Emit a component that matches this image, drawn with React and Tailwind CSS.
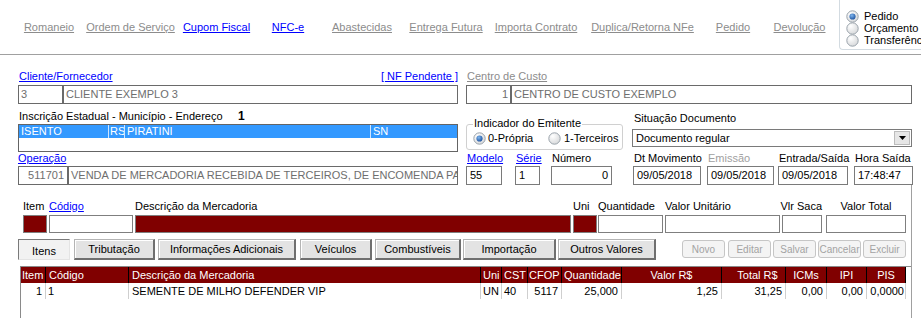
import React from 'react';

const links = [
  { t: 'Romaneio', w: 'w-[98px]', on: false },
  { t: 'Ordem de Serviço', w: 'w-[65px]', on: false },
  { t: 'Cupom Fiscal', w: 'w-[107px]', on: true },
  { t: 'NFC-e', w: 'w-[36px]', on: true },
  { t: 'Abastecidas', w: 'w-[112px]', on: false },
  { t: 'Entrega Futura', w: 'w-[56px]', on: false },
  { t: 'Importa Contrato', w: 'w-[124px]', on: false },
  { t: 'Duplica/Retorna NFe', w: 'w-[89px]', on: false },
  { t: 'Pedido', w: 'w-[92px]', on: false },
  { t: 'Devolução', w: 'w-[41px]', on: false },
];

function Radio({ checked }) {
  return (
    <svg width="13" height="13" viewBox="0 0 13 13" className="shrink-0">
      <defs>
        <radialGradient id="rface" cx="0.35" cy="0.3" r="0.8">
          <stop offset="0" stopColor="#ffffff" />
          <stop offset="1" stopColor="#d4d6d8" />
        </radialGradient>
        <radialGradient id="rdot" cx="0.4" cy="0.35" r="0.7">
          <stop offset="0" stopColor="#7fb6ee" />
          <stop offset="1" stopColor="#1a4f9c" />
        </radialGradient>
      </defs>
      <circle cx="6.5" cy="6.5" r="5.7" fill="url(#rface)" stroke="#9aa3ab" strokeWidth="1" />
      {checked && <circle cx="6.5" cy="6.5" r="3.1" fill="url(#rdot)" />}
    </svg>
  );
}

function Field({ label, labelCls = 'text-black', ml, w, value, right }) {
  return (
    <div className={`flex flex-col ${ml} ${w}`}>
      <div className={`h-[13px] leading-[13px] pl-[1px] whitespace-nowrap ${labelCls}`}>{label}</div>
      <div
        className={`mt-[1px] h-[19px] border border-[#7a7a7a] flex items-center px-[3px] overflow-hidden ${
          right ? 'justify-end' : ''
        }`}
      >
        {value}
      </div>
    </div>
  );
}

const itemCols = [
  { l: 'Item', ml: 'ml-[23px]', w: 'w-[24px]', red: true, la: 'justify-start' },
  { l: 'Código', ml: 'ml-[2px]', w: 'w-[84px]', red: false, la: 'justify-start', blue: true },
  { l: 'Descrição da Mercadoria', ml: 'ml-[2px]', w: 'w-[436px]', red: true, la: 'justify-start' },
  { l: 'Uni', ml: 'ml-[2px]', w: 'w-[24px]', red: true, la: 'justify-start' },
  { l: 'Quantidade', ml: 'ml-[1px]', w: 'w-[65px]', red: false, la: 'justify-start' },
  { l: 'Valor Unitário', ml: 'ml-[2px]', w: 'w-[115px]', red: false, la: 'justify-start' },
  { l: 'Vlr Saca', ml: 'ml-[2px]', w: 'w-[40px]', red: false, la: 'justify-end' },
  { l: 'Valor Total', ml: 'ml-[4px]', w: 'w-[80px]', red: false, la: 'justify-center' },
];

const tabs = [
  { t: 'Itens', ml: 'ml-[18px]', w: 'w-[52px]', on: true },
  { t: 'Tributação', ml: 'ml-[4px]', w: 'w-[81px]' },
  { t: 'Informações Adicionais', ml: 'ml-[3px]', w: 'w-[138px]' },
  { t: 'Veículos', ml: 'ml-[4px]', w: 'w-[72px]' },
  { t: 'Combustíveis', ml: 'ml-[3px]', w: 'w-[86px]' },
  { t: 'Importação', ml: 'ml-[2px]', w: 'w-[93px]' },
  { t: 'Outros Valores', ml: 'ml-[2px]', w: 'w-[98px]' },
];

const actions = [
  { t: 'Novo', ml: 'ml-[26px]' },
  { t: 'Editar', ml: 'ml-[3px]' },
  { t: 'Salvar', ml: 'ml-[2px]' },
  { t: 'Cancelar', ml: 'ml-[2px]' },
  { t: 'Excluir', ml: 'ml-[2px]' },
];

const cols = [
  { h: 'Item', w: 'w-[25px]', ha: 'justify-start pl-[1px]', v: '1', va: 'justify-end pr-[3px]' },
  { h: 'Código', w: 'w-[83px]', ha: 'justify-start pl-[3px]', v: '1', va: 'justify-start pl-[2px]' },
  { h: 'Descrição da Mercadoria', w: 'w-[352px]', ha: 'justify-start pl-[3px]', v: 'SEMENTE DE MILHO DEFENDER VIP', va: 'justify-start pl-[3px]' },
  { h: 'Uni', w: 'w-[21px]', ha: 'justify-start pl-[2px]', v: 'UN', va: 'justify-start pl-[2px]' },
  { h: 'CST', w: 'w-[26px]', ha: 'justify-start pl-[2px]', v: '40', va: 'justify-start pl-[2px]' },
  { h: 'CFOP', w: 'w-[34px]', ha: 'justify-start pl-[1px]', v: '5117', va: 'justify-end pr-[3px]' },
  { h: 'Quantidade', w: 'w-[60px]', ha: 'justify-start pl-[2px]', v: '25,000', va: 'justify-end pr-[3px]' },
  { h: 'Valor R$', w: 'w-[100px]', ha: 'justify-center', v: '1,25', va: 'justify-end pr-[3px]' },
  { h: 'Total R$', w: 'w-[64px]', ha: 'justify-center pl-[8px]', v: '31,25', va: 'justify-end pr-[3px]' },
  { h: 'ICMs', w: 'w-[41px]', ha: 'justify-center', v: '0,00', va: 'justify-end pr-[3px]' },
  { h: 'IPI', w: 'w-[40px]', ha: 'justify-center', v: '0,00', va: 'justify-end pr-[3px]' },
  { h: 'PIS', w: 'w-[39px]', ha: 'justify-center', v: '0,0000', va: 'justify-end pr-[1px]' },
];

export default function App() {
  return (
    <div className="w-[921px] h-[318px] overflow-hidden bg-white text-[11px] leading-[13px] text-black font-['Liberation_Sans',Arial,sans-serif]">
      {/* Top bar */}
      <div className="h-[55px] flex border-b border-[#a0a0a0]">
        <div className="flex items-center h-[54px]">
          {links.map((l) => (
            <div key={l.t} className={`flex justify-center whitespace-nowrap ${l.w}`}>
              <span className={`underline ${l.on ? 'text-[#0000ff]' : 'text-[#8c8c8c]'}`}>{l.t}</span>
            </div>
          ))}
        </div>
        <div className="ml-auto self-start w-[82px] h-[50px] border-l border-b border-[#d3dbe1] rounded-bl-[4px] overflow-hidden pt-[10px] pl-[6px] flex flex-col">
          {['Pedido', 'Orçamento', 'Transferência'].map((t, i) => (
            <div key={t} className="h-[12px] flex items-center gap-[5px] whitespace-nowrap">
              <Radio checked={i === 0} />
              <span>{t}</span>
            </div>
          ))}
        </div>
      </div>

      {/* Upper form */}
      <div className="pl-[18px]">
        <div className="mt-[15px] h-[13px] flex">
          <div className="w-[440px] flex justify-between">
            <span className="underline text-[#0000ff] pl-[1px]">Cliente/Fornecedor</span>
            <span className="underline text-[#0000ff]">[ NF Pendente ]</span>
          </div>
          <div className="ml-[8px] pl-[1px]">
            <span className="underline text-[#8c8c8c]">Centro de Custo</span>
          </div>
        </div>

        <div className="mt-[2px] h-[19px] flex text-[#6e6e6e]">
          <div className="w-[440px] border border-[#6a6a6a] flex">
            <div className="w-[43px] pl-[2px] flex items-center">3</div>
            <div className="flex-1 border-l-2 border-[#6a6a6a] pl-[2px] flex items-center">CLIENTE EXEMPLO 3</div>
          </div>
          <div className="ml-[8px] w-[446px] border border-[#6a6a6a] flex">
            <div className="w-[43px] pr-[2px] flex items-center justify-end">1</div>
            <div className="flex-1 border-l-2 border-[#6a6a6a] pl-[2px] flex items-center">CENTRO DE CUSTO EXEMPLO</div>
          </div>
        </div>

        <div className="h-[48px] flex">
          <div className="w-[440px] pt-[6px] flex flex-col">
            <div className="h-[13px] flex whitespace-nowrap">
              <span className="w-[220px] pl-[1px]">Inscrição Estadual - Município - Endereço</span>
              <span className="font-bold text-[12px]">1</span>
            </div>
            <div className="mt-[1px] h-[28px] border border-[#646464]">
              <div className="h-[13px] bg-[#3399ff] text-white flex leading-[13px]">
                <div className="w-[89px] pl-[2px]">ISENTO</div>
                <div className="w-[16px] border-l border-[#cfe5ff] pl-[1px] overflow-hidden">RS</div>
                <div className="w-[246px] border-l border-[#cfe5ff] pl-[2px]">PIRATINI</div>
                <div className="flex-1 border-l border-[#cfe5ff] pl-[2px]">SN</div>
              </div>
            </div>
          </div>
          <div className="ml-[8px] flex">
            <div className="mt-[20px] w-[157px] h-[26px] relative border border-[#d0d0d0] rounded-[3px] flex items-center pl-[6px] pt-[3px]">
              <span className="absolute left-[6px] -top-[8px] bg-white px-[1px] whitespace-nowrap">Indicador do Emitente</span>
              <div className="w-[75px] flex items-center gap-[2px]">
                <Radio checked />
                <span>0-Própria</span>
              </div>
              <div className="flex items-center gap-[3px]">
                <Radio />
                <span>1-Terceiros</span>
              </div>
            </div>
            <div className="ml-[9px] pt-[8px] flex flex-col w-[280px]">
              <div className="h-[13px] pl-[2px]">Situação Documento</div>
              <div className="mt-[4px] h-[18px] border border-[#7a7a7a] flex">
                <div className="flex-1 pl-[3px] flex items-center">Documento regular</div>
                <div className="w-[16px] m-[1px] bg-[#e6e6e6] border border-[#bcbcbc] flex items-center justify-center">
                  <svg width="7" height="4" viewBox="0 0 7 4">
                    <path d="M0 0h7L3.5 4z" fill="#000" />
                  </svg>
                </div>
              </div>
            </div>
          </div>
        </div>

        <div className="flex">
          <div className="w-[440px] flex flex-col">
            <div className="h-[13px] leading-[13px]">
              <span className="underline text-[#0000ff]">Operação</span>
            </div>
            <div className="mt-[1px] h-[19px] border border-[#6a6a6a] flex text-[#6e6e6e]">
              <div className="w-[48px] pr-[3px] flex items-center justify-end">511701</div>
              <div className="flex-1 border-l-2 border-[#6a6a6a] pl-[2px] flex items-center whitespace-nowrap overflow-hidden">
                VENDA DE MERCADORIA RECEBIDA DE TERCEIROS, DE ENCOMENDA PARA ENTREGA FUTURA
              </div>
            </div>
          </div>
          <div className="ml-[8px] flex">
            <Field label={<span className="underline">Modelo</span>} labelCls="text-[#0000ff]" ml="" w="w-[36px]" value="55" />
            <Field label={<span className="underline">Série</span>} labelCls="text-[#0000ff]" ml="ml-[13px]" w="w-[25px]" value="1" />
            <Field label="Número" ml="ml-[11px]" w="w-[61px]" value="0" right />
            <Field label="Dt Movimento" ml="ml-[21px]" w="w-[68px]" value="09/05/2018" />
            <Field label="Emissão" labelCls="text-[#a0a0a0]" ml="ml-[6px]" w="w-[67px]" value="09/05/2018" />
            <Field label="Entrada/Saída" ml="ml-[4px]" w="w-[70px]" value="09/05/2018" />
            <Field label="Hora Saída" ml="ml-[6px]" w="w-[59px]" value="17:48:47" />
          </div>
        </div>
      </div>

      {/* Lower section */}
      <div className="w-[912px] border-r border-[#a0a0a0] h-[133px]">
        <div className="pt-[15px] flex">
          {itemCols.map((c) => (
            <div key={c.l} className={`flex flex-col ${c.ml} ${c.w}`}>
              <div className={`h-[13px] flex whitespace-nowrap ${c.la}`}>
                <span className={c.blue ? 'underline text-[#0000ff]' : ''}>{c.l}</span>
              </div>
              <div
                className={`mt-[2px] h-[18px] border border-[#7f7f7f] ${c.red ? 'bg-[#800000]' : 'bg-white'}`}
              />
            </div>
          ))}
        </div>

        <div className="mt-[6px] h-[21px] flex items-start">
          {tabs.map((b) => (
            <div
              key={b.t}
              className={`${b.ml} ${b.w} h-[21px] flex items-center justify-center whitespace-nowrap ${
                b.on
                  ? 'bg-[#f2f2f2] border border-[#7a7a7a] border-r-[#e4e4e4] border-b-[#e4e4e4] pt-[3px]'
                  : 'bg-[#e3e3e3] border border-[#b4b4b4] border-r-2 border-b-2 border-r-[#6f6f6f] border-b-[#6f6f6f] shadow-[inset_1px_1px_0_#ffffff]'
              }`}
            >
              {b.t}
            </div>
          ))}
          {actions.map((a) => (
            <div
              key={a.t}
              className={`${a.ml} mt-[1px] w-[43px] h-[18px] flex items-center justify-center border border-[#c6c6c6] rounded-[3px] bg-[#f4f4f4] text-[#a3a3a3] text-[10px] whitespace-nowrap`}
            >
              {a.t}
            </div>
          ))}
        </div>

        <div className="mt-[6px] ml-[20px] w-[891px] h-[52px] border-l border-t border-[#8a8a8a]">
          <div className="w-[885px] h-[16px] bg-[#800000] text-white flex">
            {cols.map((c) => (
              <div key={c.h} className={`${c.w} h-full border-r border-black flex items-center whitespace-nowrap overflow-hidden ${c.ha}`}>
                {c.h}
              </div>
            ))}
          </div>
          <div className="w-[885px] h-[16px] flex">
            {cols.map((c) => (
              <div key={c.h} className={`${c.w} h-full border-r border-[#cfcfcf] flex items-center whitespace-nowrap overflow-hidden ${c.va}`}>
                {c.v}
              </div>
            ))}
          </div>
        </div>
      </div>
    </div>
  );
}
